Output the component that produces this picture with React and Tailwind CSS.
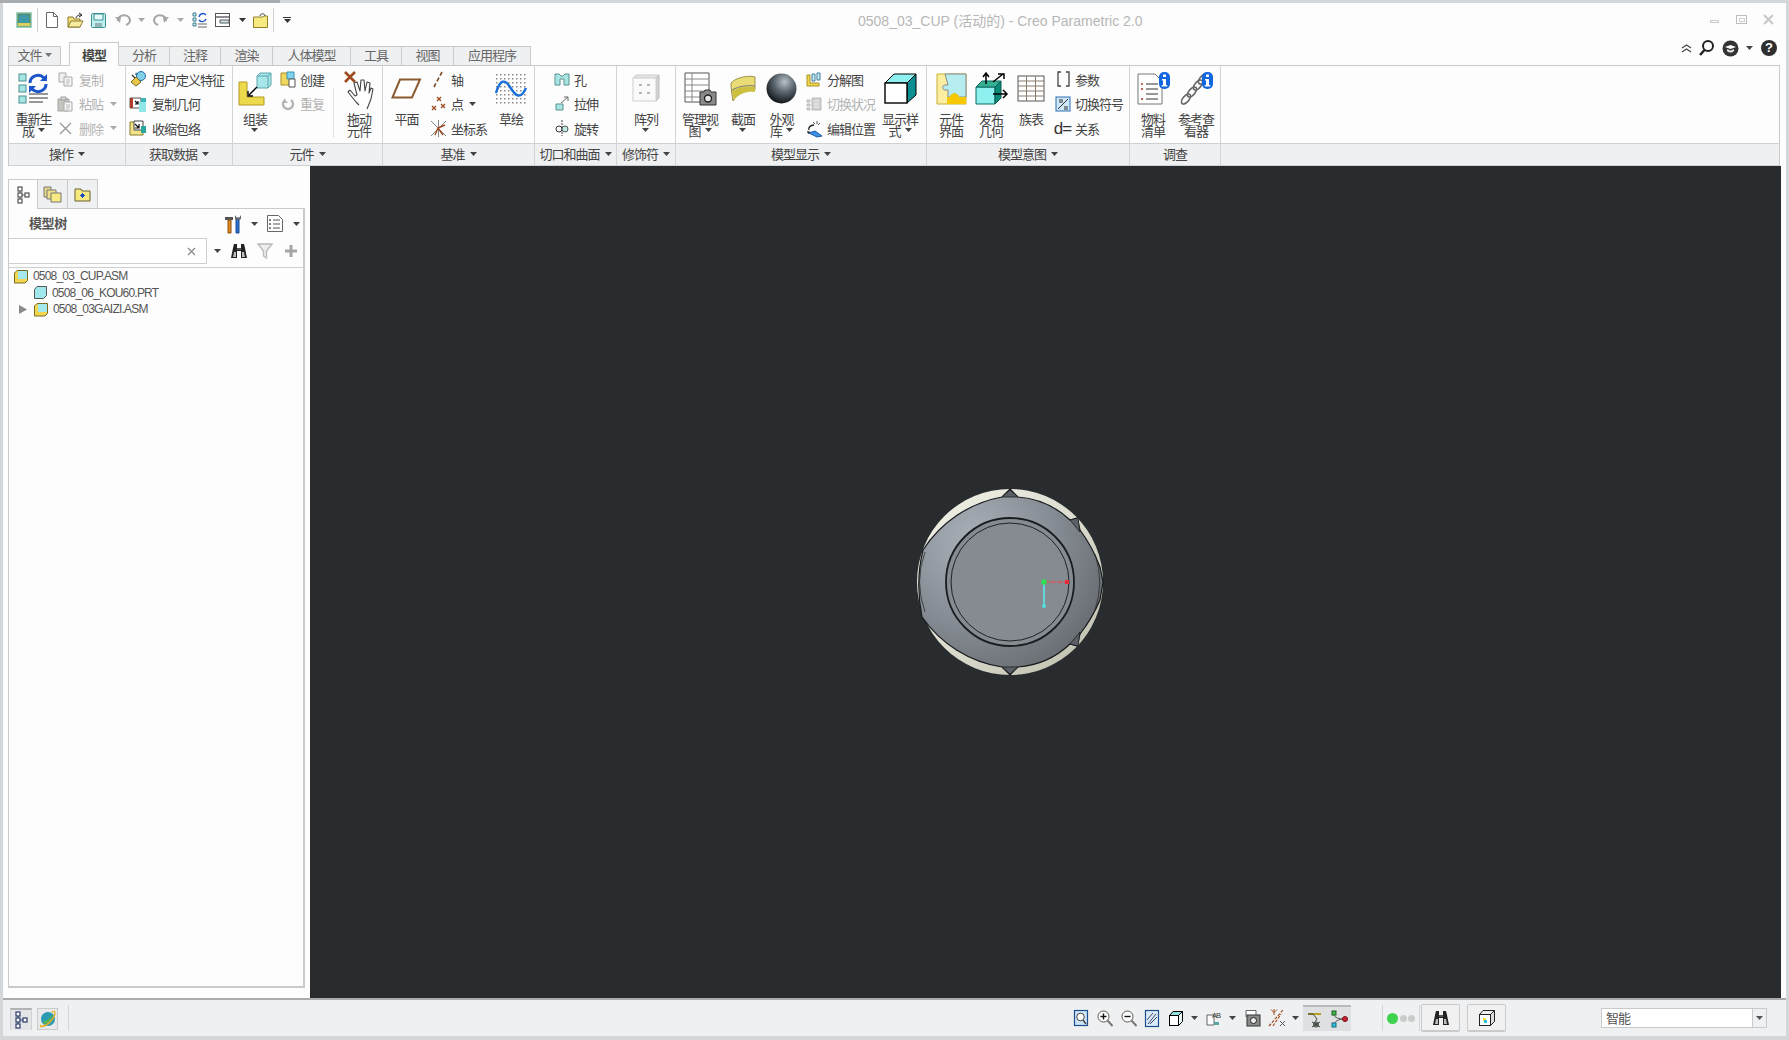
import React from "react";

const Svg = ({ w, h, children }) => (
  <svg width={w} height={h} viewBox={`0 0 ${w} ${h}`} className="block shrink-0 overflow-visible">
    {children}
  </svg>
);

const Tri = ({ c = "#444" }) => (
  <svg width="7" height="4" viewBox="0 0 7 4" className="inline-block shrink-0 align-middle">
    <path d="M0 0h7L3.5 4z" fill={c} />
  </svg>
);

/* ---------- ribbon icons ---------- */
const CyanSq = ({ x, y, s = 7 }) => <rect x={x} y={y} width={s} height={s} fill="#a5e6e4" stroke="#4a8f90" strokeWidth="1" />;

const IcRegen = () => (
  <Svg w={33} h={32}>
    <CyanSq x={2} y={2} /><CyanSq x={2} y={13} /><CyanSq x={2} y={24} />
    <path d="M13 11a8 7.5 0 0 1 14-5" fill="none" stroke="#1b55c9" strokeWidth="3" />
    <path d="M30 2v7h-7z" fill="#1b55c9" />
    <path d="M29 12a8 7.5 0 0 1-14 5" fill="none" stroke="#1b55c9" strokeWidth="3" />
    <path d="M12 21v-7h7z" fill="#1b55c9" />
    <path d="M12 22h19M12 26h19M12 30h14" stroke="#777" strokeWidth="1.4" />
  </Svg>
);
const IcCopy = () => (
  <Svg w={15} h={15}>
    <path d="M1 1h7v9H1z" fill="#eee" stroke="#aaa" /><path d="M6 5h8v9H6z" fill="#f5f5f5" stroke="#aaa" />
    <path d="M8 8h4M8 10h4M8 12h3" stroke="#bbb" />
  </Svg>
);
const IcPaste = () => (
  <Svg w={16} h={16}>
    <path d="M1 3h11v12H1z" fill="#c4c4bd" stroke="#a5a5a5" /><path d="M4 1h5v3H4z" fill="#ddd" stroke="#999" />
    <path d="M7 6h8v9H7z" fill="#f4f4f4" stroke="#aaa" /><path d="M9 9h4M9 11h4M9 13h3" stroke="#bbb" />
  </Svg>
);
const IcDel = () => (
  <Svg w={15} h={15}><path d="M2 2l11 11M13 2L2 13" stroke="#9a9a9a" strokeWidth="1.4" /></Svg>
);
const IcUdf = () => (
  <Svg w={18} h={16}>
    <circle cx="12" cy="5" r="4.5" fill="#7fd0e8" stroke="#2d6fa8" />
    <path d="M7 1l-1 3 3 0z" fill="#3a7a9a" />
    <path d="M7 6l5 5-5 4-5-4z" fill="#e8c84a" stroke="#7a6a20" />
    <path d="M3 4l3 3" stroke="#444" strokeWidth="1.4" />
  </Svg>
);
const IcCopyGeom = () => (
  <Svg w={18} h={16}>
    <path d="M1 2h11v10H1z" fill="#fff" stroke="#555" />
    <path d="M1 2h3v10H1z" fill="#b23a2a" />
    <path d="M6 5l3 3M9 5v3H6" stroke="#111" strokeWidth="1.2" fill="none" />
    <path d="M10 6h7v10h-7z" fill="#8fe6e6" /><path d="M12 2h5v4h-5z" fill="#39b5b5" />
  </Svg>
);
const IcShrink = () => (
  <Svg w={18} h={16}>
    <path d="M1 2h10v4h3v9H1z" fill="#f2e28a" stroke="#8a7a25" />
    <path d="M5 1h9v9H5z" fill="#fff" stroke="#444" />
    <path d="M6 4l4 4M10 4v4H6" stroke="#111" strokeWidth="1.2" fill="none" />
    <path d="M12 6h5v7h-5z" fill="#2aa5a0" />
  </Svg>
);
const IcAssemble = () => (
  <Svg w={34} h={33}>
    <path d="M1 10h8v15h17v8H1z" fill="#ecd94c" stroke="#b39a20" />
    <path d="M19 4l3-3h11v12l-3 3H19z" fill="#a8e6ea" stroke="#5aa5aa" />
    <path d="M22 1l-3 3h11l3-3M30 4v12" fill="none" stroke="#5aa5aa" />
    <path d="M19 15L11 23" stroke="#000" strokeWidth="1.4" />
    <path d="M10 19v5h5" fill="none" stroke="#000" strokeWidth="1.4" />
  </Svg>
);
const IcCreate = () => (
  <Svg w={17} h={17}>
    <path d="M1 2h12v12H1z" fill="#f0d860" stroke="#a89020" />
    <path d="M7 1h7v7H7z" fill="#7ed4ee" stroke="#3a90b0" />
    <path d="M9 8h6v8H9z" fill="#fff" stroke="#555" />
  </Svg>
);
const IcRepeat = () => (
  <Svg w={14} h={14}>
    <path d="M4 3a5 5 0 1 0 6 0" fill="none" stroke="#b5b5b5" strokeWidth="2.4" />
    <path d="M3 1v5h4z" fill="#b5b5b5" />
  </Svg>
);
const IcDrag = () => (
  <Svg w={31} h={34}>
    <path d="M1 1l10 10M11 1L1 11" stroke="#9c4a1f" strokeWidth="2.6" />
    <path d="M6 19l5 6 2-1-3-12 3-1 3 9 1-11 3 0 1 11 2-9 3 1-1 10 2-5 2 1-2 10-4 10M6 19l-2 2 8 10 3 3" fill="#fff" stroke="#444" strokeWidth="1.1" strokeLinejoin="round" />
  </Svg>
);
const IcPlane = () => (
  <Svg w={31} h={21}>
    <path d="M9 1.5h20L21 19.5H1.5z" fill="#fff" stroke="#8a5a30" strokeWidth="2" />
  </Svg>
);
const IcAxis = () => (
  <Svg w={12} h={17}>
    <path d="M10 1L2 16" stroke="#7a4a28" strokeWidth="1.6" strokeDasharray="4 2.5" />
  </Svg>
);
const X = ({ x, y }) => <path d={`M${x} ${y}l4 4m0-4l-4 4`} stroke="#9c4a1f" strokeWidth="1.3" />;
const IcPoint = () => (
  <Svg w={15} h={15}><X x={6} y={1} /><X x={1} y={10} /><X x={10} y={8} /></Svg>
);
const IcCsys = () => (
  <Svg w={17} h={17}>
    <path d="M1 1l15 15M16 1L1 16M8.5 0v17" stroke="#777" strokeWidth=".9" />
    <path d="M8 8l7-3M8 8l5 7M8 8l-3 7" stroke="#9c4a1f" strokeWidth="1.4" />
  </Svg>
);
const IcSketch = () => {
  const dots = [];
  for (let y = 1; y < 30; y += 4) for (let x = 1; x < 31; x += 4) dots.push(<rect key={x + "-" + y} x={x} y={y} width="1.5" height="1.5" fill="#8a8a8a" />);
  return (
    <Svg w={32} h={30}>
      {dots}
      <path d="M1 20C5 6 10 6 15 14s10 14 16 1" fill="none" stroke="#1a6fd8" strokeWidth="2.4" />
    </Svg>
  );
};
const IcHole = () => (
  <Svg w={16} h={13}>
    <path d="M1 1h4l2 2h2l2-2h4v11h-5V6H6v6H1z" fill="#a8e6e4" stroke="#5c8f90" />
  </Svg>
);
const IcExtrude = () => (
  <Svg w={15} h={15}>
    <path d="M1 8h7v6H1z" fill="#a8e6e4" stroke="#5c8f90" />
    <path d="M6 7l7-6M9 1h4v4" fill="none" stroke="#666" />
  </Svg>
);
const IcRevolve = () => (
  <Svg w={16} h={16}>
    <path d="M8 0v16" stroke="#444" strokeDasharray="2 1" />
    <circle cx="5" cy="9" r="3" fill="#fff" stroke="#333" />
    <circle cx="11" cy="9" r="3" fill="#bfeaea" stroke="#555" />
  </Svg>
);
const IcPattern = () => (
  <Svg w={28} h={28}>
    <path d="M4 1h23l-3 3H1z" fill="#e8e8e8" stroke="#ccc" />
    <path d="M24 4l3-3v23l-3 3z" fill="#d4d4d4" stroke="#bbb" />
    <rect x="1" y="4" width="23" height="23" fill="#fafafa" stroke="#d0d0d0" />
    <path d="M7 10h3v2H7zM15 10h3v2h-3zM7 18h3v2H7zM15 18h3v2h-3z" fill="#b5b5b5" />
  </Svg>
);
const IcMgrView = () => (
  <Svg w={33} h={33}>
    <path d="M1 1h24v29H1z" fill="#fff" stroke="#555" />
    <path d="M1 7h24M1 13h24M1 19h24M1 25h16M8 1v29" stroke="#888" />
    <path d="M16 20h4l1-2h5l1 2h5v13H16z" fill="#8a8a88" stroke="#333" />
    <circle cx="24" cy="26.5" r="3.5" fill="#e8e8e8" stroke="#222" strokeWidth="1.4" />
  </Svg>
);
const IcSection = () => (
  <Svg w={26} h={27}>
    <path d="M1 8C6 2 20 0 25 2v13C18 15 7 18 3 26 2 20 1 14 1 8z" fill="#e9dc74" stroke="#9a8f50" />
    <path d="M2 16c6-4 16-5 23-4v5c-7-1-16 1-21 8z" fill="#cdbf40" />
    <path d="M2 15c7-4 16-5 23-4" stroke="#777" fill="none" />
  </Svg>
);
const IcSphere = () => (
  <Svg w={31} h={31}>
    <defs>
      <radialGradient id="sph" cx="60%" cy="28%" r="75%">
        <stop offset="0" stopColor="#b9c2c8" /><stop offset=".45" stopColor="#5c6770" /><stop offset="1" stopColor="#0d1114" />
      </radialGradient>
    </defs>
    <circle cx="15.5" cy="15.5" r="15" fill="url(#sph)" />
  </Svg>
);
const IcExplode = () => (
  <Svg w={16} h={15}>
    <path d="M1 3h3v8h9v3H1z" fill="#eed850" stroke="#a89020" />
    <path d="M6 2h3v7H6zM11 1h3v7h-3z" fill="#c9ecf2" stroke="#3f7fa0" />
  </Svg>
);
const IcToggle = () => (
  <Svg w={16} h={14}>
    <path d="M1 3h3v2H1zM1 7h3v2H1zM1 11h3v2H1z" fill="#ddd" stroke="#bbb" />
    <path d="M6 1h9v12H6z" fill="#d0d0d0" stroke="#bbb" /><path d="M8 4h5M8 7h5M8 10h5" stroke="#eee" />
  </Svg>
);
const IcEditPos = () => (
  <Svg w={17} h={17}>
    <path d="M7 2l2 2M11 1v3M14 3l-2 2" stroke="#555" />
    <path d="M8 5C4 5 2 8 3 10" fill="none" stroke="#222" strokeWidth="1.4" />
    <path d="M1 11l4 1-3 2" fill="#222" />
    <path d="M3 13l6-2 7 5-5 1z" fill="#3a8fe0" stroke="#1a5aa8" />
  </Svg>
);
const IcDisp = () => (
  <Svg w={33} h={31}>
    <path d="M10 1h22l-9 9H1z" fill="#8ff0f0" stroke="#000" />
    <path d="M23 10l9-9v21l-9 8z" fill="#0a8f92" stroke="#000" />
    <rect x="1" y="10" width="22" height="20" fill="#fff" stroke="#000" strokeWidth="1.4" />
  </Svg>
);
const IcInterface = () => (
  <Svg w={30} h={31}>
    <path d="M1 1h29v30H1z" fill="#fbeea0" stroke="#c8b030" />
    <path d="M9 1h21v23h-8c0-4-6-4-6 0h-4v-7h-3c-3 0-3-5 0-5h3z" fill="#b6edf0" stroke="#888" />
    <path d="M14 24c0-5 9-5 9 0h7v7H11v-7z" fill="#f5c800" />
  </Svg>
);
const IcPublish = () => (
  <Svg w={32} h={33}>
    <path d="M1 15h19v17H1z" fill="#8ff0f0" stroke="#0a6a60" />
    <path d="M1 15l6-6h19l-6 6z" fill="#35b090" stroke="#0a6a60" />
    <path d="M20 15l6-6v17l-6 6z" fill="#0a8a78" stroke="#0a5a50" />
    <path d="M11 12V2M8 5l3-4 3 4M18 10l10-8M23 2h6v5M18 22h13M28 18l4 4-4 4" fill="none" stroke="#000" strokeWidth="1.5" />
  </Svg>
);
const IcFamily = () => (
  <Svg w={28} h={27}>
    <rect x="1" y="1" width="26" height="25" fill="#fff" stroke="#555" />
    <path d="M1 6h26M1 11h26M1 16h26M1 21h26M9.5 1v25M18.5 1v25" stroke="#8a7a6a" />
  </Svg>
);
const IcParam = () => (
  <Svg w={15} h={16}>
    <path d="M5 1H2v14h3M10 1h3v14h-3" fill="none" stroke="#444" strokeWidth="1.3" />
  </Svg>
);
const IcSym = () => (
  <Svg w={16} h={16}>
    <rect x="1" y="1" width="14" height="14" fill="#cfe8f8" stroke="#2a6fb0" />
    <path d="M3 13L13 3M4 4h4M4 6h4M9 11h4M9 13h4" stroke="#333" />
  </Svg>
);
const IcRel = () => (
  <span className="font-['Liberation_Sans',sans-serif] text-[17px] leading-[17px] text-[#333] -ml-[1px] whitespace-nowrap tracking-[-1px]">d=</span>
);
const Info = ({ x, y }) => (
  <g>
    <rect x={x} y={y} width="11" height="17" rx="5" fill="#1267e0" />
    <path d={`M${x + 4} ${y + 2.5}h3v2.6h-3zM${x + 3} ${y + 7}h4v6h1.200v1.500H${x + 2.8}v-1.500H${x + 4}v-4.500h-1z`} fill="#fff" />
  </g>
);
const IcBom = () => (
  <Svg w={33} h={33}>
    <path d="M1 2h17l7 7v23H1z" fill="#fff" stroke="#777" />
    <path d="M9 12h12M9 17h12M9 22h12M9 27h12" stroke="#333" />
    <path d="M4 12h2M4 17h2M4 27h2" stroke="#b03020" strokeWidth="1.4" />
    <Info x={22} y={0} />
  </Svg>
);
const Link = ({ cx, cy }) => (
  <ellipse cx={cx} cy={cy} rx="6" ry="3" transform={`rotate(-50 ${cx} ${cy})`} fill="none" stroke="#666" strokeWidth="1.700" />
);
const IcRef = () => (
  <Svg w={33} h={33}>
    <Link cx={6} cy={27} /><Link cx={12} cy={20} /><Link cx={18} cy={13} /><Link cx={23} cy={7} />
    <Info x={22} y={0} />
  </Svg>
);

/* ---------- ribbon primitives ---------- */
const txt = "font-['Noto_Sans_CJK_SC','Liberation_Sans',sans-serif] text-[13px] tracking-[-1px]";

const Big = ({ w, icon, lines, arrow, oneLineArrow }) => (
  <div className={`flex flex-col items-center shrink-0 pt-[3px] ${w}`}>
    <div className="h-[38px] flex items-center justify-center">{icon}</div>
    <div className={`${txt} mt-[6px] text-center leading-[11.5px] text-[#444] whitespace-nowrap`}>
      {lines.map((l, i) => (
        <div key={i} className="h-[11.5px] flex items-center justify-center gap-[4px]">
          <span>{l}</span>
          {arrow && i === lines.length - 1 && !oneLineArrow && <Tri />}
        </div>
      ))}
      {oneLineArrow && (
        <div className="h-[11.5px] flex items-center justify-center"><Tri /></div>
      )}
    </div>
  </div>
);

const Small = ({ icon, text, arrow, gray, gap = "gap-[7px]" }) => (
  <div className={`h-[24.5px] flex items-center ${gap} whitespace-nowrap`}>
    <div className="w-[14px] flex justify-center shrink-0">{icon}</div>
    <span className={`${txt} ${gray ? "text-[#b4b4b4]" : "text-[#444]"}`}>{text}</span>
    {arrow && <span className="flex"><Tri c={gray ? "#aaa" : "#444"} /></span>}
  </div>
);

const Col = ({ className = "", children }) => <div className={`flex flex-col pt-[1px] shrink-0 ${className}`}>{children}</div>;

const Group = ({ w, label, arrow = true, pad = "", children }) => (
  <div className={`flex flex-col shrink-0 border-r border-[#d2d4d6] ${w}`}>
    <div className={`h-[77px] flex ${pad}`}>{children}</div>
    <div className={`h-[23px] pb-[1px] bg-[#eff0f1] border-t border-b border-[#cfd1d3] flex items-center justify-center gap-[5px] ${txt} text-[#444] whitespace-nowrap`}>
      <span>{label}</span>
      {arrow && <Tri />}
    </div>
  </div>
);

/* ---------- title bar ---------- */
const QNew = () => <Svg w={12} h={16}><path d="M.5.5h7l4 4v11H.5z" fill="#fff" stroke="#666" /><path d="M7.5.5v4h4" fill="none" stroke="#666" /></Svg>;
const QOpen = () => (
  <Svg w={17} h={15}>
    <path d="M1 4h5l1 2h6v8H1z" fill="#f3e07a" stroke="#8a7a30" />
    <path d="M1 14l3-6h12l-3 6z" fill="#f8ec9e" stroke="#8a7a30" />
    <path d="M9 5c1-3 3-3 5-3M12 0l3 2-3 2" fill="none" stroke="#222" />
  </Svg>
);
const QSave = () => (
  <Svg w={15} h={15}>
    <rect x=".5" y=".5" width="14" height="14" rx="1" fill="#bdeff0" stroke="#3f8f90" />
    <path d="M3 1h9v6H3z" fill="#e8fbfb" stroke="#3f8f90" /><path d="M4 10h7v4H4z" fill="#93b4b6" />
  </Svg>
);
const QUndo = () => <Svg w={15} h={12}><path d="M3 7a6 5 0 1 1 8 4" fill="none" stroke="#a5a5a5" strokeWidth="2" /><path d="M0 3l5 6 1-6z" fill="#a5a5a5" /></Svg>;
const QRedo = () => <Svg w={15} h={12}><path d="M12 7a6 5 0 1 0-8 4" fill="none" stroke="#a5a5a5" strokeWidth="2" /><path d="M15 3l-5 6-1-6z" fill="#a5a5a5" /></Svg>;
const QRegen = () => (
  <Svg w={16} h={16}>
    <path d="M1 1h3v3H1zM1 6h3v3H1zM1 11h3v3H1z" fill="#cdeef0" stroke="#3f7f90" />
    <path d="M7 5a4 4 0 0 1 7-2M14 7a4 4 0 0 1-7 1" fill="none" stroke="#1b55c9" strokeWidth="1.4" />
    <path d="M6 12h9M6 15h9" stroke="#666" />
  </Svg>
);
const QWin = () => (
  <Svg w={15} h={14}>
    <rect x=".5" y=".5" width="14" height="13" fill="#fff" stroke="#555" /><path d="M1 4h13" stroke="#666" strokeWidth="1.5" />
    <path d="M5 7h9v3H5z" fill="#cfe9ee" stroke="#555" />
  </Svg>
);
const QFolder = () => (
  <Svg w={15} h={15}>
    <path d="M.5 4h9l2-1h3v11.5H.5z" fill="#f6ea80" stroke="#8f8030" />
    <path d="M7 3c0-3 5-3 5 0" fill="none" stroke="#444" />
  </Svg>
);
const QLogo = () => (
  <Svg w={16} h={16}>
    <rect width="16" height="16" fill="#9bd4c4" />
    <rect x="2" y="2" width="12" height="12" fill="#3f9aa8" stroke="#5a7f40" />
    <path d="M2 11h12v3H2z" fill="#d8d060" />
  </Svg>
);

/* ---------- tree ---------- */
const PrtIcon = () => (
  <Svg w={13} h={13}>
    <path d="M3 .5h9.5v9l-3 3H.5v-9z" fill="#9fe8ec" stroke="#555" />
  </Svg>
);
const AsmIcon = () => (
  <Svg w={14} h={13}>
    <path d="M.5 3l2.500-2.500h10.500v10l-2.500 2.500H.5z" fill="#f3d650" stroke="#7a6a20" />
    <path d="M4 1h9v8H4z" fill="#a2e8ec" />
  </Svg>
);
const TreeGlyph = ({ c = "#555" }) => (
  <Svg w={13} h={18}>
    <g fill="#fff" stroke={c} strokeWidth="1.2">
      <rect x="1" y="1" width="4" height="4" /><rect x="1" y="7" width="4" height="4" /><rect x="1" y="13" width="4" height="4" /><rect x="8" y="7" width="4" height="4" />
    </g>
    <path d="M3 5v2M3 11v2M5 9h3" stroke={c} />
  </Svg>
);
const Folders = () => (
  <Svg w={19} h={18}>
    <path d="M1 2h7v10H1z" fill="#e8d98a" stroke="#777" /><path d="M4 5h9v9H4z" fill="#efe08a" stroke="#777" /><path d="M8 8h10v9H8z" fill="#f6ea80" stroke="#777" />
  </Svg>
);
const FolderStar = () => (
  <Svg w={17} h={15}>
    <path d="M1 2h6l1 2h8v10H1z" fill="#f6ea80" stroke="#6a6030" />
    <path d="M8.500 6v5M6 8.500h5M7 7l3 3M10 7l-3 3" stroke="#1b4fc0" />
  </Svg>
);
const Tools = () => (
  <Svg w={19} h={20}>
    <path d="M1 3h8v3H1z" fill="#555" /><path d="M4 6h3v13H4z" fill="#e08a20" stroke="#8a5010" />
    <path d="M12 4h3v15h-3z" fill="#2a6fd0" stroke="#1a4a90" /><path d="M11 1l2 3h2l2-3v4l-2 1h-3l-1-1z" fill="#666" />
  </Svg>
);
const ListIc = () => (
  <Svg w={16} h={17}>
    <path d="M.5.5h11l4 4v12H.5z" fill="#fff" stroke="#666" />
    <path d="M6 5h7M6 9h7M6 13h7" stroke="#555" /><circle cx="3" cy="5" r="1" fill="#555" /><circle cx="3" cy="9" r="1" fill="#555" /><circle cx="3" cy="13" r="1" fill="#555" />
  </Svg>
);
const Binoc = ({ s = 16 }) => (
  <svg width={s} height={s} viewBox="0 0 16 16" className="block shrink-0">
    <path d="M2 5l1-4h3v4h4V1h3l1 4 2 10h-6V8H6v7H0z" fill="#222" />
    <path d="M3 9h2v5H2zM11 9h2l1 5h-3z" fill="#bbb" />
    <path d="M6 5h4v2H6z" fill="#555" />
  </svg>
);
const Funnel = () => <Svg w={16} h={16}><path d="M1 1h14L9.500 8v7l-3-2V8z" fill="#eee" stroke="#bbb" strokeWidth="1.400" /></Svg>;
const Plus = () => <Svg w={12} h={12}><path d="M4.500 0h3v4.500H12v3H7.500V12h-3V7.500H0v-3h4.500z" fill="#a5a5a5" /></Svg>;

/* ---------- status bar ---------- */
const Glass = ({ sign }) => (
  <Svg w={16} h={17}>
    <circle cx="6.500" cy="6.500" r="5.500" fill="#fff" stroke="#555" />
    {sign && <path d="M3.500 6.500h6" stroke="#111" strokeWidth="1.400" />}
    {sign === "+" && <path d="M6.500 3.500v6" stroke="#111" strokeWidth="1.400" />}
    <path d="M10.500 10.500l5 5.500" stroke="#777" strokeWidth="2" />
  </Svg>
);
const SRefit = () => (
  <Svg w={14} h={17}>
    <rect x=".5" y=".5" width="13" height="15" fill="#cfe4f6" stroke="#1a4f90" strokeWidth="1.200" />
    <circle cx="6.500" cy="7" r="3.800" fill="#fff" stroke="#444" /><path d="M9 10l3 4" stroke="#444" strokeWidth="1.400" />
  </Svg>
);
const SRepaint = () => (
  <Svg w={14} h={17}>
    <rect x=".5" y=".5" width="13" height="16" fill="#dbeaf8" stroke="#1a4f90" strokeWidth="1.200" />
    <path d="M3 14L11 4M5 14l7-7M2 10l6-7" stroke="#446" />
  </Svg>
);
const SCube = () => (
  <Svg w={14} h={15}>
    <path d="M4 .5h9.500l-4 4H.5z" fill="#8fe0e0" stroke="#000" /><path d="M9.500 4.500l4-4v10l-4 4z" fill="#e8f8f8" stroke="#000" />
    <rect x=".5" y="4.500" width="9" height="10" fill="#fff" stroke="#000" />
  </Svg>
);
const SAb = () => (
  <Svg w={18} h={16}>
    <path d="M1 5h7v10H1z" fill="#fff" stroke="#666" /><path d="M8 12h5v3H8z" fill="#5aa5a0" />
    <text x="6" y="8" fontSize="7.500" fill="#333" fontFamily="Liberation Sans">AB</text>
  </Svg>
);
const SCam = () => (
  <Svg w={16} h={17}>
    <path d="M1 .5h10v6H1z" fill="#fff" stroke="#666" /><rect x="2" y="5" width="13" height="11" fill="#8a8a88" stroke="#333" />
    <circle cx="8.500" cy="10.500" r="3" fill="#eee" stroke="#222" />
  </Svg>
);
const SDatum = () => (
  <Svg w={18} h={18}>
    <path d="M6 0v6M3 .5l3 3M9 .5l-3 3" stroke="#a0501f" strokeWidth="1" />
    <path d="M1 17L15 1M5 17l8-12" stroke="#a0501f" strokeWidth="1.200" strokeDasharray="3 1.500" />
    <path d="M12 12l5 5m0-5l-5 5" stroke="#555" />
  </Svg>
);
const SBug = () => (
  <Svg w={16} h={17}>
    <path d="M1 3h13" stroke="#b8a020" strokeWidth="2" /><path d="M1 3l5 0 4 5-2 3" stroke="#444" fill="none" />
    <ellipse cx="9" cy="13.500" rx="3" ry="3" fill="#5a6a60" /><path d="M5 11l8 5M13 11l-8 5" stroke="#444" />
  </Svg>
);
const SNodes = () => (
  <Svg w={17} h={17}>
    <path d="M3 3c0 4 5 5 11 5M3 14c0-4 5-6 11-6" fill="none" stroke="#555" />
    <rect x="1" y="0" width="4" height="4" fill="#44b84a" stroke="#1a5a20" /><rect x="1" y="12" width="4" height="4" fill="#30c0e0" stroke="#1a6a80" />
    <circle cx="14" cy="8" r="2.500" fill="#d02030" stroke="#701018" />
  </Svg>
);
const SBoxSel = () => (
  <Svg w={16} h={16}>
    <path d="M4 .5h11.500l-4 4H.5z" fill="#eee" stroke="#222" /><path d="M11.500 4.500l4-4v11l-4 4z" fill="#ddd" stroke="#222" />
    <rect x=".5" y="4.500" width="11" height="11" fill="#fff" stroke="#222" />
    <path d="M4 8h3v3H4z" fill="#f5e030" /><path d="M5 10h3v3H5z" fill="#20c0e0" />
  </Svg>
);
const Planet = () => (
  <Svg w={18} h={18}>
    <circle cx="9" cy="9" r="7" fill="#2a9ab0" /><path d="M4 12c4-1 8-4 10-8-1 5-5 9-9 10z" fill="#5ab840" />
    <path d="M2 15c-2 2 1 2 5 0s9-8 9-12c0-2-1-2-3-1" fill="none" stroke="#e8b020" strokeWidth="1.400" />
  </Svg>
);
const Sep = ({ className }) => <div className={`w-px h-[26px] bg-[#d4d6d8] shrink-0 ${className}`} />;

/* ---------- model ---------- */
const Knob = () => (
  <svg width="200" height="200" viewBox="0 0 200 200" className="block shrink-0">
    <defs>
      <radialGradient id="body" cx="30%" cy="28%" r="85%">
        <stop offset="0" stopColor="#aab1b8" /><stop offset=".55" stopColor="#848a91" /><stop offset="1" stopColor="#62666b" />
      </radialGradient>
      <linearGradient id="rim" x1="0" y1="0" x2="1" y2="1">
        <stop offset="0" stopColor="#f2f2e8" /><stop offset=".5" stopColor="#dcdccf" /><stop offset="1" stopColor="#bcbcac" />
      </linearGradient>
    </defs>
    <circle cx="100" cy="100" r="93" fill="url(#rim)" />
    <path d="M100 7L108 15A85 85 0 0 1 160 38L167 36L170 48A150 150 0 0 1 190 85L193 100L190 118A150 150 0 0 1 170 152L167 164L160 162A85 85 0 0 1 108 185L100 193L92 185A120 120 0 0 1 12 135Q5 100 13 68A120 120 0 0 1 92 15Z" fill="url(#body)" stroke="#15181a" strokeWidth="1.200" />
    <path d="M100 8L92 15H108zM160 38L168 36L170 50zM100 192L92 185H108zM160 162L168 164L170 150z" fill="#5b6067" stroke="#1a1d1f" strokeWidth=".8" />
    <path d="M15 70A88 88 0 0 0 15 130M185 72A88 88 0 0 1 185 128" fill="none" stroke="#2a2d30" strokeWidth=".8" />
    <circle cx="100" cy="100" r="64" fill="#868b92" stroke="#1a1d20" strokeWidth="1.800" />
    <circle cx="100" cy="100" r="59" fill="#868b92" stroke="#1f2225" strokeWidth="1" />
    <path d="M134 100h24" stroke="#d85a58" strokeWidth="1.300" strokeDasharray="5 1.500" />
    <rect x="155" y="98" width="4" height="4" fill="#ef2a3a" />
    <path d="M134 100v24" stroke="#5ee0e0" strokeWidth="1.800" />
    <circle cx="134" cy="124" r="2" fill="#4fe0e0" />
    <circle cx="134" cy="100" r="2.700" fill="#30e050" />
  </svg>
);

/* ---------- page ---------- */
const tabBase = "h-[19px] pb-[2px] flex items-center justify-center border-t border-r border-[#c8cacc] bg-[#eff0f1] text-[#666] whitespace-nowrap";

export default function App() {
  return (
    <div className={`w-[1789px] h-[1040px] flex flex-col bg-white overflow-hidden ${txt}`}>
      <div className="h-[3px] bg-[#d3d7da] shrink-0 flex"><div className="w-[280px] bg-[#a9acae]" /></div>

      <div className="flex-1 flex min-h-0 border-l-[3px] border-r-[3px] border-[#d3d7da] bg-[#fdfdfd]">
        <div className="flex-1 flex flex-col min-w-0">
          {/* quick access + title */}
          <div className="h-[38px] flex items-start pt-[9px] shrink-0">
            <div className="w-[290px] h-[16px] flex items-center shrink-0">
              <div className="ml-[13px]"><QLogo /></div>
              <div className="w-px h-[24px] bg-[#d0d0d0] ml-[5px]" />
              <div className="ml-[8px]"><QNew /></div>
              <div className="ml-[9px]"><QOpen /></div>
              <div className="ml-[7px]"><QSave /></div>
              <div className="ml-[9px]"><QUndo /></div>
              <div className="ml-[8px] flex"><Tri c="#aaa" /></div>
              <div className="ml-[9px]"><QRedo /></div>
              <div className="ml-[8px] flex"><Tri c="#aaa" /></div>
              <div className="ml-[8px]"><QRegen /></div>
              <div className="ml-[7px]"><QWin /></div>
              <div className="ml-[9px] flex"><Tri c="#333" /></div>
              <div className="ml-[7px]"><QFolder /></div>
              <div className="w-px h-[24px] bg-[#d0d0d0] ml-[5px]" />
              <div className="ml-[9px] flex flex-col gap-[1px] items-center"><div className="w-[8px] h-[1.500px] bg-[#333]" /><Tri c="#333" /></div>
            </div>
            <div className="ml-[565px] mt-[1px] font-['Liberation_Sans','Noto_Sans_CJK_SC',sans-serif] text-[14px] tracking-normal text-[#b7b7b7] leading-[16px] whitespace-nowrap">
              0508_03_CUP (活动的) - Creo Parametric 2.0
            </div>
            <div className="ml-auto flex items-start pr-[12px]">
              <div className="w-[9px] h-[3px] mt-[8px] border border-[#c8c8c8]" />
              <div className="w-[11px] h-[9px] mt-[3px] ml-[17px] border border-[#bdbdbd] p-[1.500px]"><div className="w-full h-full border border-[#d0d0d0]" /></div>
              <div className="ml-[16px] mt-[3px]"><Svg w={11} h={9}><path d="M1 0l9 9M10 0L1 9" stroke="#c8c8c8" strokeWidth="2" /></Svg></div>
            </div>
          </div>

          {/* tabs */}
          <div className="h-[24px] flex items-end shrink-0 pl-[5px] pr-[6px] relative z-10">
            <div className="w-[53px] h-[19px] pb-[2px] flex items-center justify-center gap-[3px] border-t border-l border-r border-[#c8cacc] bg-[#eff0f1] text-[#666] shrink-0">文件<Tri c="#777" /></div>
            <div className="ml-[8px] w-[50px] h-[24px] -mb-px flex items-center justify-center border-t border-l border-r border-[#c8cacc] bg-[#fdfdfd] font-bold text-[#444] shrink-0">模型</div>
            <div className={`${tabBase} w-[51px]`}>分析</div>
            <div className={`${tabBase} w-[51px]`}>注释</div>
            <div className={`${tabBase} w-[52px]`}>渲染</div>
            <div className={`${tabBase} w-[78px]`}>人体模型</div>
            <div className={`${tabBase} w-[51px]`}>工具</div>
            <div className={`${tabBase} w-[52px]`}>视图</div>
            <div className={`${tabBase} w-[77px]`}>应用程序</div>
            <div className="ml-auto h-[24px] flex items-center pr-[3px] pb-[10px] self-end">
              <Svg w={11} h={9}><path d="M1 4l4.500-3L10 4M1 8l4.500-3L10 8" fill="none" stroke="#444" strokeWidth="1.200" /></Svg>
              <div className="ml-[7px]"><Svg w={15} h={16}><circle cx="9" cy="6" r="5" fill="none" stroke="#222" strokeWidth="2" /><path d="M5.500 10l-4.500 5" stroke="#222" strokeWidth="2.500" /></Svg></div>
              <div className="ml-[8px]"><Svg w={17} h={17}><circle cx="8.500" cy="8.500" r="8" fill="#333" /><path d="M3 7l5.500-2 5.500 2-5.500 2z" fill="#fff" /><path d="M5 9v2c2 2 5 2 7 0V9l-3.500 1.500z" fill="#ddd" /></Svg></div>
              <div className="ml-[7px] flex"><Tri c="#444" /></div>
              <div className="ml-[8px] w-[16px] h-[16px] rounded-full bg-[#2e2e2e] text-white text-[13px] font-bold flex items-center justify-center font-['Liberation_Sans',sans-serif] tracking-normal">?</div>
            </div>
          </div>

          {/* ribbon */}
          <div className="ml-[5px] mr-[6px] h-[101px] flex border-t border-l border-r border-[#c8cacc] shrink-0 bg-[#fdfdfd]">
            <Group w="w-[117px]" label="操作">
              <Big w="w-[49px]" icon={<IcRegen />} lines={["重新生", "成"]} arrow />
              <Col>
                <Small icon={<IcCopy />} text="复制" gray />
                <Small icon={<IcPaste />} text="粘贴" gray arrow />
                <Small icon={<IcDel />} text="删除" gray arrow />
              </Col>
            </Group>
            <Group w="w-[107px]" label="获取数据" pad="pl-[5px]">
              <Col>
                <Small icon={<IcUdf />} text="用户定义特征" />
                <Small icon={<IcCopyGeom />} text="复制几何" />
                <Small icon={<IcShrink />} text="收缩包络" />
              </Col>
            </Group>
            <Group w="w-[150px]" label="元件">
              <Big w="w-[44px]" icon={<IcAssemble />} lines={["组装"]} arrow oneLineArrow />
              <Col className="ml-[4px] w-[52px]">
                <Small icon={<IcCreate />} text="创建" gap="gap-[5px]" />
                <Small icon={<IcRepeat />} text="重复" gray gap="gap-[5px]" />
              </Col>
              <div className="w-px h-[50px] bg-[#e4e4e4] mt-[22px] shrink-0" />
              <Big w="w-[50px]" icon={<IcDrag />} lines={["拖动", "元件"]} />
            </Group>
            <Group w="w-[152px]" label="基准">
              <Big w="w-[47px]" icon={<IcPlane />} lines={["平面"]} />
              <Col className="ml-[1px] w-[57px]">
                <Small icon={<IcAxis />} text="轴" gap="gap-[6px]" />
                <Small icon={<IcPoint />} text="点" gap="gap-[6px]" arrow />
                <Small icon={<IcCsys />} text="坐标系" gap="gap-[6px]" />
              </Col>
              <Big w="w-[46px]" icon={<IcSketch />} lines={["草绘"]} />
            </Group>
            <Group w="w-[82px]" label="切口和曲面" pad="pl-[20px]">
              <Col>
                <Small icon={<IcHole />} text="孔" gap="gap-[5px]" />
                <Small icon={<IcExtrude />} text="拉伸" gap="gap-[5px]" />
                <Small icon={<IcRevolve />} text="旋转" gap="gap-[5px]" />
              </Col>
            </Group>
            <Group w="w-[59px]" label="修饰符">
              <Big w="w-[58px]" icon={<IcPattern />} lines={["阵列"]} arrow oneLineArrow />
            </Group>
            <Group w="w-[251px]" label="模型显示">
              <Big w="w-[48px]" icon={<IcMgrView />} lines={["管理视", "图"]} arrow />
              <Big w="w-[38px]" icon={<IcSection />} lines={["截面"]} arrow oneLineArrow />
              <Big w="w-[39px]" icon={<IcSphere />} lines={["外观", "库"]} arrow />
              <Col className="ml-[6px] w-[68px]">
                <Small icon={<IcExplode />} text="分解图" gap="gap-[6px]" />
                <Small icon={<IcToggle />} text="切换状况" gray gap="gap-[6px]" />
                <Small icon={<IcEditPos />} text="编辑位置" gap="gap-[6px]" />
              </Col>
              <Big w="w-[50px]" icon={<IcDisp />} lines={["显示样", "式"]} arrow />
            </Group>
            <Group w="w-[203px]" label="模型意图">
              <Big w="w-[48px]" icon={<IcInterface />} lines={["元件", "界面"]} />
              <Big w="w-[32px]" icon={<IcPublish />} lines={["发布", "几何"]} />
              <Big w="w-[48px]" icon={<IcFamily />} lines={["族表"]} />
              <Col className="ml-[1px]">
                <Small icon={<IcParam />} text="参数" gap="gap-[5px]" />
                <Small icon={<IcSym />} text="切换符号" gap="gap-[5px]" />
                <Small icon={<IcRel />} text="关系" gap="gap-[5px]" />
              </Col>
            </Group>
            <Group w="w-[91px]" label="调查" arrow={false}>
              <Big w="w-[46px]" icon={<IcBom />} lines={["物料", "清单"]} />
              <Big w="w-[40px]" icon={<IcRef />} lines={["参考查", "看器"]} />
            </Group>
            <div className="flex-1 flex flex-col">
              <div className="h-[77px]" />
              <div className="h-[23px] bg-[#eff0f1] border-t border-b border-[#cfd1d3]" />
            </div>
          </div>

          {/* workspace */}
          <div className="flex-1 flex min-h-0">
            <div className="w-[307px] shrink-0 pl-[5px] pr-[5px] pt-[13px] flex flex-col">
              <div className="h-[30px] flex shrink-0 relative z-10 -mb-px">
                <div className="w-[30px] h-[30px] border-t border-l border-r border-[#c8cacc] bg-[#fdfdfd] flex items-center justify-center"><TreeGlyph /></div>
                <div className="w-[30px] h-[29px] border-t border-r border-[#c8cacc] bg-[#eff0f1] flex items-center justify-center"><Folders /></div>
                <div className="w-[30px] h-[29px] border-t border-r border-[#c8cacc] bg-[#eff0f1] flex items-center justify-center"><FolderStar /></div>
              </div>
              <div className="h-[780px] border border-[#c8cacc] border-r-2 border-b-2 flex flex-col shrink-0">
                <div className="h-[29px] flex items-center shrink-0">
                  <span className="ml-[20px] font-bold text-[#555] tracking-[-0.400px] pb-[2px]">模型树</span>
                  <div className="ml-[157px]"><Tools /></div>
                  <div className="ml-[8px] flex"><Tri /></div>
                  <div className="ml-[9px]"><ListIc /></div>
                  <div className="ml-[10px] flex"><Tri /></div>
                </div>
                <div className="h-[30px] border-b border-[#cdcfd1] flex items-start shrink-0">
                  <div className="w-[198px] h-[26px] border border-l-0 border-[#cdcfd1] bg-white flex items-center justify-end pr-[10px]">
                    <Svg w={9} h={9}><path d="M1 1l7 7M8 1L1 8" stroke="#888" strokeWidth="1.200" /></Svg>
                  </div>
                  <div className="flex items-center h-[26px]">
                    <div className="ml-[7px] flex"><Tri /></div>
                    <div className="ml-[10px]"><Binoc /></div>
                    <div className="ml-[10px]"><Funnel /></div>
                    <div className="ml-[12px]"><Plus /></div>
                  </div>
                </div>
                <div className="font-['Liberation_Sans',sans-serif] text-[12px] tracking-[-0.800px] text-[#555] leading-[16.500px]">
                  <div className="h-[16.500px] flex items-center pl-[5px] gap-[5px]"><AsmIcon /><span>0508_03_CUP.ASM</span></div>
                  <div className="h-[16.500px] flex items-center pl-[25px] gap-[5px]"><PrtIcon /><span>0508_06_KOU60.PRT</span></div>
                  <div className="h-[16.500px] flex items-center pl-[10px]">
                    <Svg w={8} h={9}><path d="M0 0l8 4.500L0 9z" fill="#8a8a8a" /></Svg>
                    <div className="ml-[7px]"><AsmIcon /></div>
                    <span className="ml-[5px]">0508_03GAIZI.ASM</span>
                  </div>
                </div>
              </div>
            </div>
            <div className="w-[1471px] shrink-0 bg-[#282c2e] flex items-center pl-[600px]">
              <Knob />
            </div>
          </div>

          {/* status bar */}
          <div className="h-[38px] shrink-0 border-t-2 border-[#a9abad] bg-[#eff0f1] flex items-center">
            <div className="ml-[7px] w-[22px] h-[22px] mt-[2px] bg-[#e4e5e6] border-t-2 border-[#b0b2b4] border-x border-x-[#d0d2d4] flex items-center justify-center"><TreeGlyph c="#2a3a6a" /></div>
            <div className="ml-[5px] w-[21px] h-[22px] mt-[2px] bg-[#e8e9ea] border border-[#c8cacc] flex items-center justify-center"><Planet /></div>
            <Sep className="ml-[10px]" />
            <div className="ml-[1005px]"><SRefit /></div>
            <div className="ml-[9px]"><Glass sign="+" /></div>
            <div className="ml-[8px]"><Glass sign="-" /></div>
            <div className="ml-[8px]"><SRepaint /></div>
            <div className="ml-[10px]"><SCube /></div>
            <div className="ml-[8px] flex"><Tri /></div>
            <div className="ml-[8px]"><SAb /></div>
            <div className="ml-[5px] flex"><Tri /></div>
            <div className="ml-[9px]"><SCam /></div>
            <div className="ml-[7px]"><SDatum /></div>
            <div className="ml-[6px] flex"><Tri /></div>
            <div className="ml-[4px] w-[24px] h-[26px] bg-[#dfe0e1] border-t-2 border-[#b8babc] flex items-center justify-center"><SBug /></div>
            <div className="w-[24px] h-[26px] bg-[#dfe0e1] border-t-2 border-[#b8babc] flex items-center justify-center"><SNodes /></div>
            <Sep className="ml-[31px]" />
            <div className="ml-[4px] w-[11px] h-[11px] rounded-full bg-[#3fd24f]" />
            <div className="ml-[2px] w-[7px] h-[7px] rounded-full bg-[#c8cccb]" />
            <div className="ml-[1px] w-[7px] h-[7px] rounded-full bg-[#c8cccb]" />
            <Sep className="ml-[4px]" />
            <div className="ml-[1px] w-[39px] h-[28px] rounded-[2px] bg-[#f1f1f2] border border-[#c8cacc] border-b-2 flex items-center justify-center"><Binoc /></div>
            <div className="ml-[7px] w-[39px] h-[28px] rounded-[2px] bg-[#f1f1f2] border border-[#c8cacc] border-b-2 flex items-center justify-center"><SBoxSel /></div>
            <div className="ml-[95px] w-[166px] h-[20px] bg-white border border-[#c8cacc] flex items-center">
              <span className="ml-[4px] flex-1 text-[#555]">智能</span>
              <div className="w-[14px] h-full border-l border-[#c8cacc] bg-[#eff0f1] flex items-center justify-center"><Tri c="#555" /></div>
            </div>
          </div>
        </div>
      </div>
      <div className="h-[4px] bg-[#d3d7da] shrink-0" />
    </div>
  );
}
